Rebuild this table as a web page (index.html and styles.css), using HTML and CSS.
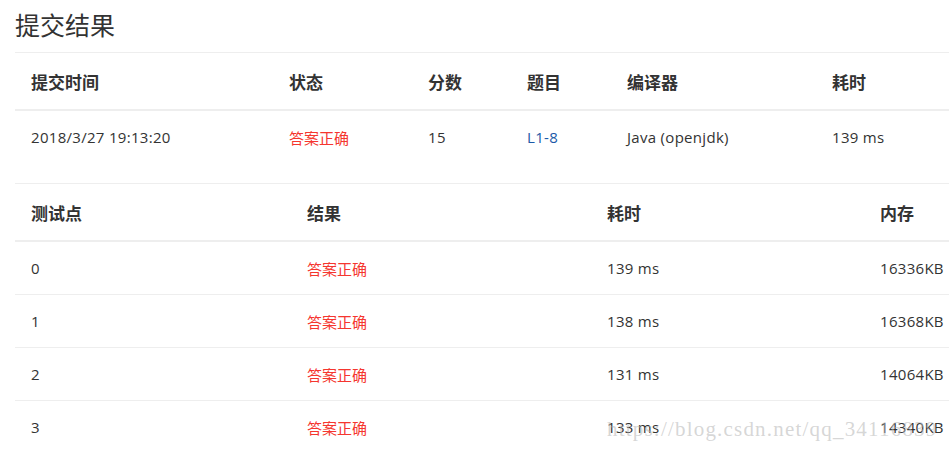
FILE: index.html
```html
<!DOCTYPE html>
<html lang="zh-CN">
<head>
<meta charset="utf-8">
<title>提交结果</title>
<link rel="stylesheet" href="styles.css">
</head>
<body>
<div class="page">
  <h1 class="title">提交结果</h1>
  <table class="tbl summary">
    <colgroup>
      <col class="c1"><col class="c2"><col class="c3"><col class="c4"><col class="c5"><col class="c6">
    </colgroup>
    <thead>
      <tr><th>提交时间</th><th>状态</th><th>分数</th><th>题目</th><th>编译器</th><th>耗时</th></tr>
    </thead>
    <tbody>
      <tr><td>2018/3/27 19:13:20</td><td class="ok">答案正确</td><td>15</td><td><a class="link" href="#">L1-8</a></td><td>Java (openjdk)</td><td>139 ms</td></tr>
    </tbody>
  </table>
  <table class="tbl cases">
    <colgroup>
      <col class="d1"><col class="d2"><col class="d3"><col class="d4">
    </colgroup>
    <thead>
      <tr><th>测试点</th><th>结果</th><th>耗时</th><th>内存</th></tr>
    </thead>
    <tbody>
      <tr><td>0</td><td class="ok">答案正确</td><td>139 ms</td><td>16336KB</td></tr>
      <tr><td>1</td><td class="ok">答案正确</td><td>138 ms</td><td>16368KB</td></tr>
      <tr><td>2</td><td class="ok">答案正确</td><td>131 ms</td><td>14064KB</td></tr>
      <tr><td>3</td><td class="ok">答案正确</td><td>133 ms</td><td>14340KB</td></tr>
    </tbody>
  </table>
  <div class="watermark">https://blog.csdn.net/qq_34116839</div>
</div>
</body>
</html>
```
FILE: styles.css
```css
html, body {
  margin: 0;
  padding: 0;
  background: #fff;
  overflow: hidden;
}
body {
  font-family: "Open Sans", "Noto Sans CJK SC", sans-serif;
  color: #333;
}
.page {
  position: relative;
  padding-left: 15px;
  width: 950px;
}
.title {
  margin: 7px 0 11px 0;
  font-size: 25px;
  line-height: 34px;
  font-weight: normal;
  color: #333;
  font-family: "Noto Sans CJK SC", sans-serif;
}
.tbl {
  width: 950px;
  border-collapse: collapse;
  table-layout: fixed;
  border-top: 1px solid #eee;
}
.tbl th {
  height: 56px;
  padding: 0 0 0 16px;
  text-align: left;
  font-size: 17px;
  font-weight: bold;
  color: #333;
  font-family: "Noto Sans CJK SC", sans-serif;
  border-bottom: 2px solid #eee;
  vertical-align: middle;
}
.tbl td {
  height: 52px;
  padding: 0 0 0 16px;
  font-size: 15px;
  letter-spacing: 0.3px;
  color: #333;
  vertical-align: middle;
  white-space: nowrap;
}
.cases td {
  border-bottom: 1px solid #eee;
}
.summary {
  margin-bottom: 20px;
}
.tbl td.ok {
  color: #f5362f;
  letter-spacing: 0;
  font-family: "Noto Sans CJK SC", sans-serif;
}
.link {
  color: #1c5aa8;
  text-decoration: none;
}
.c1 { width: 258px; }
.c2 { width: 139px; }
.c3 { width: 99px; }
.c4 { width: 100px; }
.c5 { width: 205px; }
.c6 { width: 149px; }
.d1 { width: 276px; }
.d2 { width: 300px; }
.d3 { width: 273px; }
.d4 { width: 101px; }
.watermark {
  position: absolute;
  left: 607px;
  top: 410px;
  font-family: "Liberation Serif", serif;
  font-size: 21px;
  letter-spacing: 1.2px;
  color: rgba(180, 180, 180, 0.55);
  white-space: nowrap;
  pointer-events: none;
}
```
